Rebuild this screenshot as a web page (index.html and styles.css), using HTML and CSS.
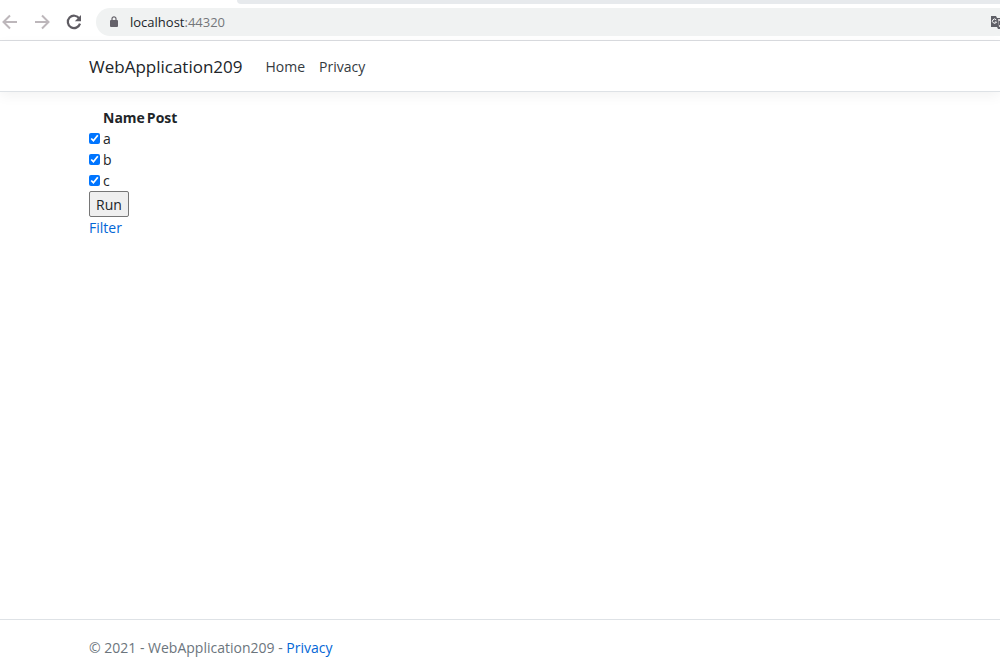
FILE: index.html
```
<!DOCTYPE html>
<html lang="en">
<head>
    <meta charset="UTF-8">
    <meta name="viewport" content="width=device-width, initial-scale=1.0">
    <title>Home Page - WebApplication209</title>
    <link rel="stylesheet" href="styles.css">
</head>
<body>

    <!-- Browser bar -->
    <div class="tab-strip"><div class="active-tab"></div></div>
    <div class="toolbar">
        <button type="button" class="tool" aria-label="Back">
            <svg width="16" height="16" viewBox="0 0 16 16" fill="none" stroke="#bdb7bb" stroke-width="2"><path d="M15 8H2M8 1.5L1.5 8L8 14.5"/></svg>
        </button>
        <button type="button" class="tool" aria-label="Forward">
            <svg width="16" height="16" viewBox="0 0 16 16" fill="none" stroke="#bdb7bb" stroke-width="2"><path d="M1 8H14M8 1.5L14.5 8L8 14.5"/></svg>
        </button>
        <button type="button" class="tool" aria-label="Reload">
            <svg width="16" height="16" viewBox="0 0 16 16"><path d="M13.3 4.6A6.2 6.2 0 1 0 14 9.6" fill="none" stroke="#5f5c63" stroke-width="2.2"/><path d="M15 1V7.2H8.8Z" fill="#5f5c63"/></svg>
        </button>
        <div class="address">
            <svg width="8" height="12" viewBox="0 0 8 12"><rect y="4" width="8" height="7" rx="1" fill="#65626a"/><path d="M2 4.5V2.8a2 2 0 0 1 4 0V4.5" fill="none" stroke="#65626a" stroke-width="1.2"/></svg>
            <span class="url">localhost<span class="port">:44320</span></span>
            <svg class="translate" width="9" height="14" viewBox="0 0 9 14"><path d="M0 1h5l1 2h3v11H7l-1-2H0Z" fill="#5f6067"/><path d="M5.2 4.8A2.1 2.1 0 1 0 5.5 7H3.8" fill="none" stroke="#fff" stroke-width="1"/><path d="M7 4h2v8H8Z" fill="#d5d0d2"/><path d="M7.5 7H9M8.5 6v4" stroke="#5f6067"/></svg>
        </div>
    </div>

    <header>
        <nav class="container">
            <a class="brand" href="#">WebApplication209</a>
            <a class="nav-link" href="#">Home</a>
            <a class="nav-link" href="#">Privacy</a>
        </nav>
    </header>

    <main>
        <div class="container">
            <form>
                <table>
                    <thead>
                        <tr><td></td><th>Name</th><th>Post</th></tr>
                    </thead>
                    <tbody>
                        <tr><td><input type="checkbox" id="row-a" checked></td><td><label for="row-a">a</label></td><td></td></tr>
                        <tr><td><input type="checkbox" id="row-b" checked></td><td><label for="row-b">b</label></td><td></td></tr>
                        <tr><td><input type="checkbox" id="row-c" checked></td><td><label for="row-c">c</label></td><td></td></tr>
                    </tbody>
                </table>
                <button type="button" class="run">Run</button>
            </form>
            <a href="#">Filter</a>
        </div>
    </main>

    <footer>
        <div class="container">&copy; 2021 - WebApplication209 - <a href="#">Privacy</a></div>
    </footer>

</body>
</html>
```
FILE: styles.css
```
* {
    box-sizing: border-box;
}

body {
    display: flex;
    flex-direction: column;
    min-height: 100vh;
    margin: 0;
    font-family: "Segoe UI", "Open Sans", "Noto Sans", sans-serif;
    font-size: 14px;
    line-height: 21px;
    color: #212529;
    background-color: #fff;
}

a {
    color: #0366d6;
    text-decoration: none;
}

.container {
    width: 100%;
    max-width: 852px;
    margin: 0 auto;
    padding: 0 15px;
}

/* Browser bar */
.tab-strip {
    height: 4px;
    padding-left: 237px;
}

.active-tab {
    height: 4px;
    background-color: #e7eaed;
    border-bottom-left-radius: 6px;
}

.toolbar {
    display: flex;
    align-items: center;
    height: 37px;
    border-bottom: 1px solid #dadce0;
}

.tool {
    display: flex;
    justify-content: center;
    width: 32px;
    margin-left: -6px;
    margin-right: 6px;
    padding: 0;
    border: none;
    background: none;
}

.address {
    display: flex;
    flex: 1;
    align-items: center;
    gap: 12px;
    height: 28px;
    padding-left: 14px;
    border-radius: 14px 0 0 14px;
    background-color: #f0f2f2;
}

.url {
    flex: 1;
    font-size: 13px;
}

.port {
    color: #74777b;
}

/* Header */
header {
    border-bottom: 1px solid #dee2e6;
    box-shadow: 0 4px 12px rgba(0, 0, 0, 0.05);
}

nav {
    display: flex;
    align-items: center;
    height: 50px;
}

.brand {
    margin-right: 16px;
    font-size: 17px;
    color: #212529;
}

.nav-link {
    padding: 0 7px;
    color: #343a40;
}

/* Content */
main {
    flex: 1;
    padding-top: 15px;
}

table {
    border-collapse: collapse;
}

td, th {
    height: 21px;
    padding: 0 1px;
    text-align: left;
}

td:first-child {
    padding: 0;
}

input[type="checkbox"] {
    display: block;
    width: 11px;
    height: 11px;
    margin: 0 2px 0 0;
}

.run {
    display: block;
    height: 26px;
    padding: 0 6px;
    border: 1px solid #767676;
    border-radius: 2px;
    background-color: #efefef;
    font-family: inherit;
    font-size: 14px;
    color: #212529;
}

/* Footer */
footer {
    padding-top: 18px;
    border-top: 1px solid #dee2e6;
    line-height: 19px;
    color: #6c757d;
}
```
